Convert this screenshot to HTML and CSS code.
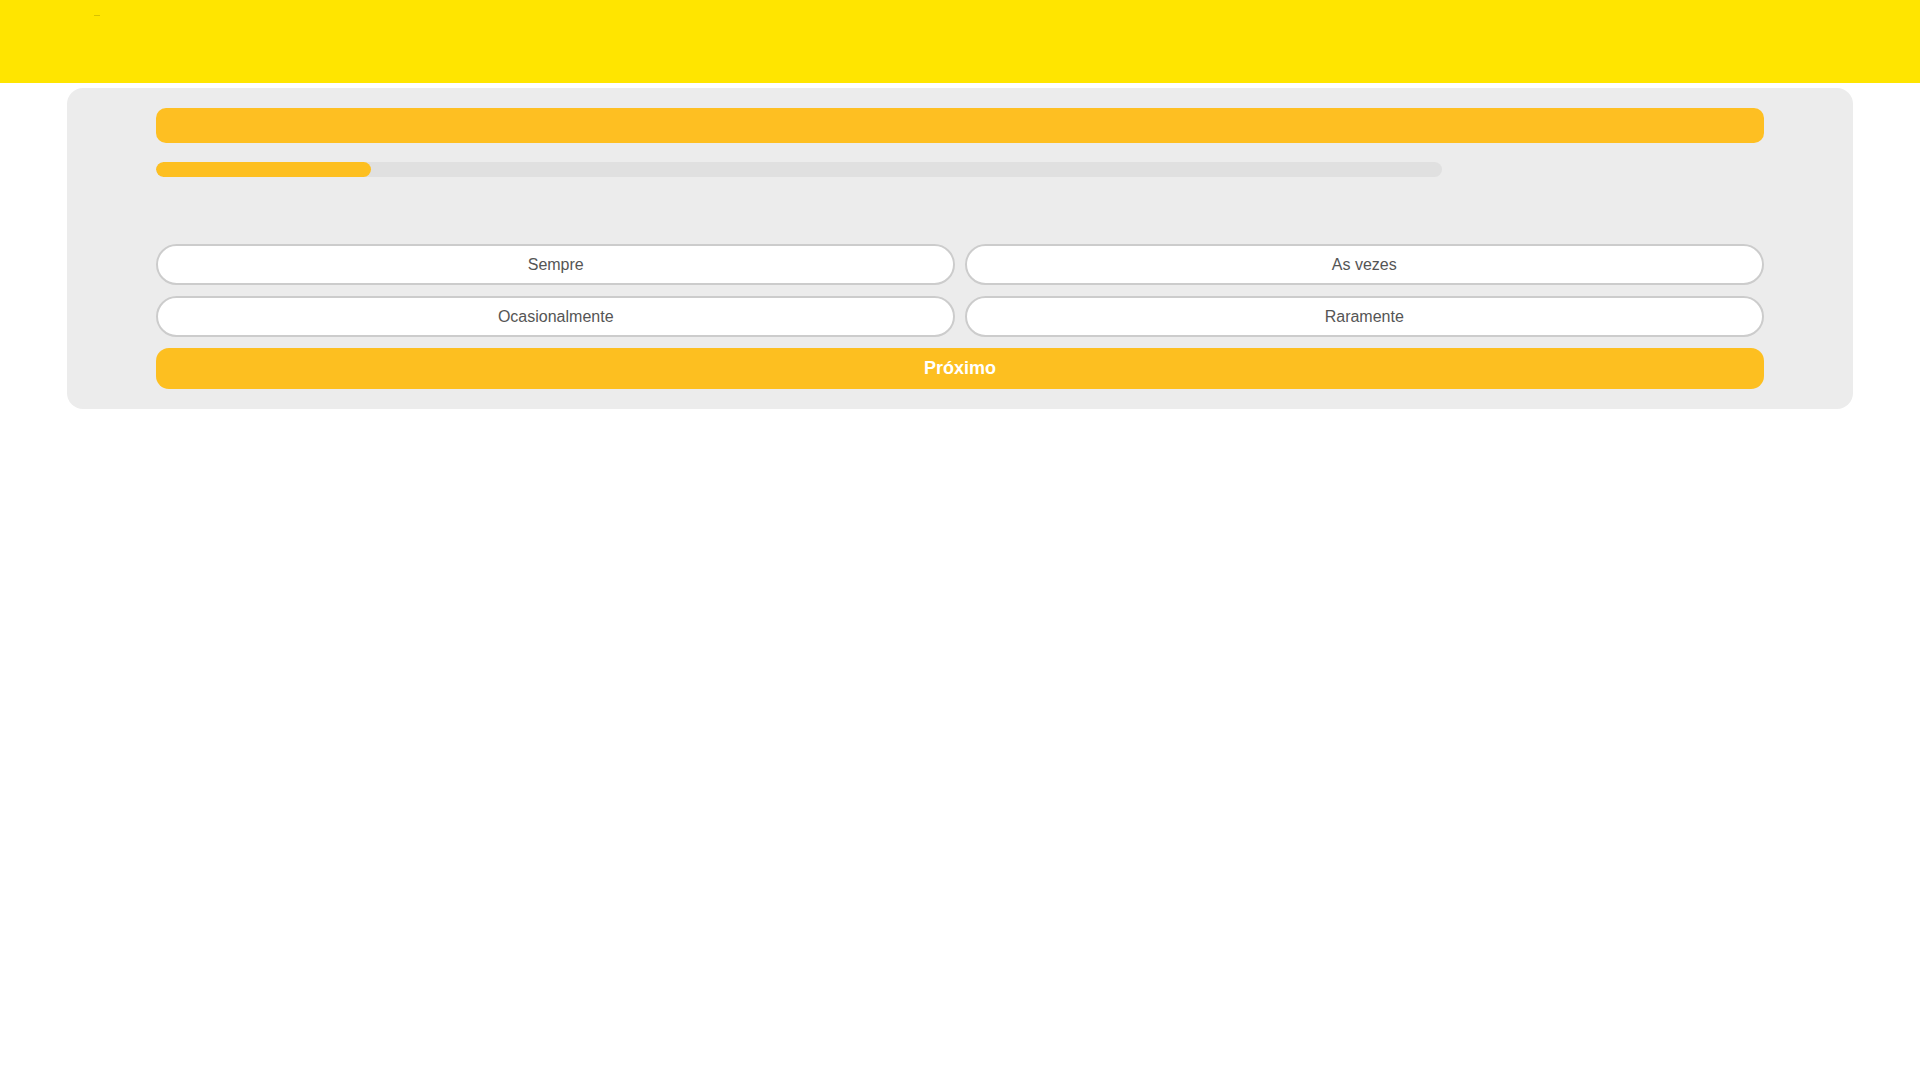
FILE: index.html
```html
<!DOCTYPE html>
<html lang="pt">
<head>
<meta charset="utf-8">
<title>Quiz</title>
<link rel="stylesheet" href="styles.css">
</head>
<body>
<header class="topbar">
  <span class="logo-mark"></span>
</header>
<main class="card">
  <div class="inner">
    <div class="question-bar"></div>
    <div class="progress"><div class="progress-fill" style="width:16.7%"></div></div>
    <div class="spacer"></div>
    <div class="options">
      <button class="option">Sempre</button>
      <button class="option">As vezes</button>
      <button class="option">Ocasionalmente</button>
      <button class="option">Raramente</button>
    </div>
    <button class="next">Próximo</button>
  </div>
</main>
</body>
</html>
```

FILE: styles.css
```css
html, body {
  margin: 0;
  padding: 0;
  background: #ffffff;
  font-family: "Liberation Sans", Arial, sans-serif;
}
.topbar {
  height: 83px;
  background: #ffe500;
  position: relative;
}
.logo-mark {
  position: absolute;
  left: 94px;
  top: 15px;
  width: 6px;
  height: 1px;
  background: #d8c200;
}
.card {
  width: 93%;
  margin: 5px auto 0;
  background: #ececec;
  border-radius: 16px;
  padding: 20px 0 20px;
  box-sizing: border-box;
}
.inner {
  width: 90%;
  margin: 0 auto;
  display: flex;
  flex-direction: column;
}
.question-bar {
  height: 35px;
  background: #febf22;
  border-radius: 10px;
}
.progress {
  margin-top: 19px;
  width: 80%;
  height: 15px;
  background: #e0e0e0;
  border-radius: 8px;
  overflow: hidden;
}
.progress-fill {
  height: 100%;
  background: #fdbf20;
  border-radius: 8px;
}
.spacer {
  height: 67px;
}
.options {
  display: grid;
  grid-template-columns: 1fr 1fr;
  column-gap: 10px;
  row-gap: 11px;
}
.option {
  height: 41px;
  background: #ffffff;
  border: 2px solid #cccccc;
  border-radius: 21px;
  font-family: "Liberation Sans", Arial, sans-serif;
  font-size: 16px;
  color: #555555;
  padding: 0;
  cursor: pointer;
}
.next {
  margin-top: 11px;
  height: 41px;
  background: #fdbf20;
  border: none;
  border-radius: 13px;
  color: #ffffff;
  font-family: "Liberation Sans", Arial, sans-serif;
  font-size: 18px;
  font-weight: bold;
  padding: 0;
  cursor: pointer;
}
```
